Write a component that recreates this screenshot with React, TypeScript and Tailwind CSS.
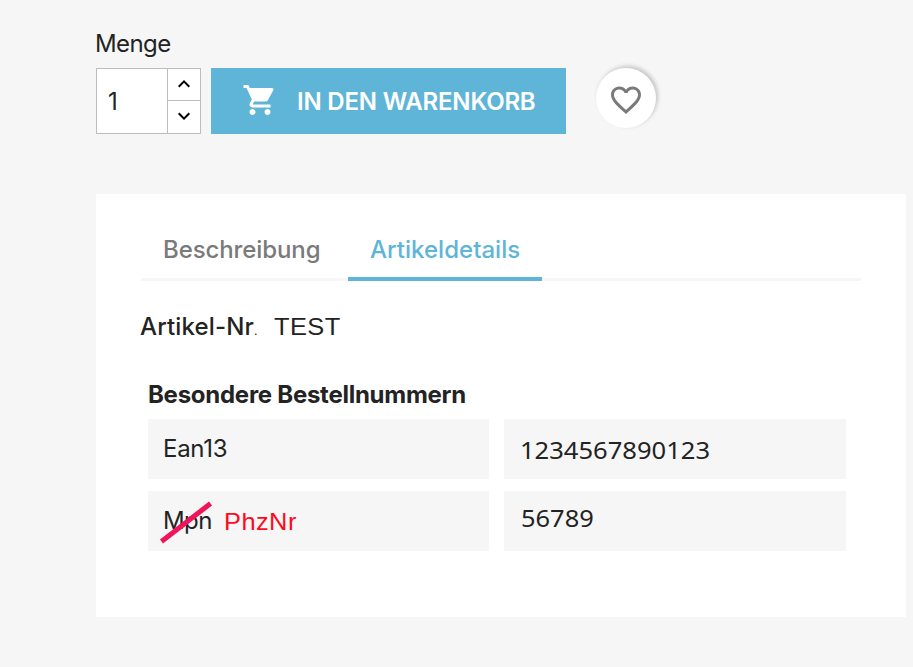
import React, { useState } from "react";
import {
  MdFavoriteBorder,
  MdKeyboardArrowDown,
  MdKeyboardArrowUp,
  MdShoppingCart,
} from "react-icons/md";

const tabs = [
  {
    name: "Beschreibung",
    size: "w-[207px] pl-[22px]",
    text: "tracking-[-0.1px]",
  },
  {
    name: "Artikeldetails",
    size: "w-[194px] pl-[22px]",
    text: "tracking-[0.03px]",
  },
];

const App = () => {
  const [quantity, setQuantity] = useState(1);
  const [activeTab, setActiveTab] = useState("Artikeldetails");

  return (
    <div className="min-h-screen bg-[#f6f6f6] pt-7 pl-24 font-['Inter',sans-serif] text-2xl text-[#232323]">
      <div className="h-10 leading-8">
        <span className="-ml-px tracking-[-0.6px]">Menge</span>
      </div>

      {/* Add to cart */}
      <div className="flex h-[66px]">
        <div className="flex w-[105px] border border-[#bdbdbd] bg-white">
          <input
            type="text"
            value={quantity}
            onChange={(e) => setQuantity(Number(e.target.value) || 1)}
            className="w-[70px] pt-0.5 pl-[11px] outline-none"
          />
          <div className="flex flex-1 flex-col border-l border-[#bdbdbd] text-black">
            <button
              onClick={() => setQuantity(quantity + 1)}
              className="flex h-8 items-center justify-center border-b border-[#bdbdbd] pr-px pb-px"
            >
              <MdKeyboardArrowUp className="h-6 w-6" />
            </button>
            <button
              onClick={() => setQuantity(Math.max(1, quantity - 1))}
              className="flex h-8 items-center justify-center pr-px pb-0.5"
            >
              <MdKeyboardArrowDown className="h-6 w-6" />
            </button>
          </div>
        </div>

        <button className="ml-2.5 flex w-[355px] items-center bg-[#5eb5d7] pl-[31px] font-semibold text-white">
          <MdShoppingCart className="mb-0.5 h-9 w-9" />
          <span className="ml-[19px] pt-0.5 whitespace-nowrap tracking-[-0.2px]">
            IN DEN WARENKORB
          </span>
        </button>

        <button className="ml-[30px] flex h-15 w-15 items-center justify-center rounded-full bg-white pt-1 text-[#7a7a7a] shadow-[2px_-2px_4px_0_rgba(0,0,0,0.2)]">
          <MdFavoriteBorder className="h-9 w-9" />
        </button>
      </div>

      {/* Product details */}
      <div className="mt-15 h-[423px] w-[810px] bg-white px-[45px] pt-[35px]">
        <div className="flex h-13 w-[720px] shadow-[inset_0_-3px_0_#f6f6f6]">
          {tabs.map((tab) => (
            <button
              key={tab.name}
              onClick={() => setActiveTab(tab.name)}
              className={`${tab.size} flex items-start border-b-4 pt-[5px] text-left font-medium leading-8 ${
                activeTab === tab.name
                  ? "border-[#5eb5d7] text-[#5eb5d7]"
                  : "border-transparent text-[#7a7a7a]"
              }`}
            >
              <span className={tab.text}>{tab.name}</span>
            </button>
          ))}
        </div>

        <div className="mt-[30px] flex h-8 leading-8">
          <span className="w-[133px] font-medium">
            <span className="-ml-px tracking-[0.15px]">Artikel-Nr</span>
            <span className="text-xs font-normal">.</span>
          </span>
          <span className="origin-left scale-x-[1.06] font-['Liberation_Sans',sans-serif] tracking-[0.4px]">
            TEST
          </span>
        </div>

        <div className="mt-9 ml-[7px] h-10 font-bold leading-8">
          <span className="tracking-[-0.26px]">Besondere Bestellnummern</span>
        </div>

        <div className="ml-[7px] grid w-[698px] grid-cols-[341px_342px] gap-x-[15px] gap-y-3">
          <div className="flex h-15 items-center bg-[#f6f6f6] pl-[15px]">
            <span className="tracking-[-0.3px]">Ean13</span>
          </div>
          <div className="flex h-15 items-center bg-[#f6f6f6] pt-0.5 pl-4 font-['Noto_Sans',sans-serif]">
            <span className="origin-left scale-x-[1.065]">1234567890123</span>
          </div>
          <div className="flex h-15 items-center bg-[#f6f6f6] pl-[15px]">
            <div className="relative w-[61px]">
              <span className="tracking-[-0.6px]">Mpn</span>
              <svg
                className="absolute -top-1.5 -left-1 h-12 w-15"
                viewBox="0 0 60 48"
              >
                <path d="M2.5 42.5L51.5 4.5" stroke="#f0145a" strokeWidth="5" />
              </svg>
            </div>
            <span className="origin-left scale-x-[1.06] pt-px font-['Liberation_Sans',sans-serif] tracking-[0.4px] text-[#ff0a1e]">
              PhzNr
            </span>
          </div>
          <div className="flex h-15 items-center bg-[#f6f6f6] pb-1.5 pl-[17px] font-['Noto_Sans',sans-serif]">
            <span className="origin-left scale-x-[1.06]">56789</span>
          </div>
        </div>
      </div>
    </div>
  );
};

export default App;
